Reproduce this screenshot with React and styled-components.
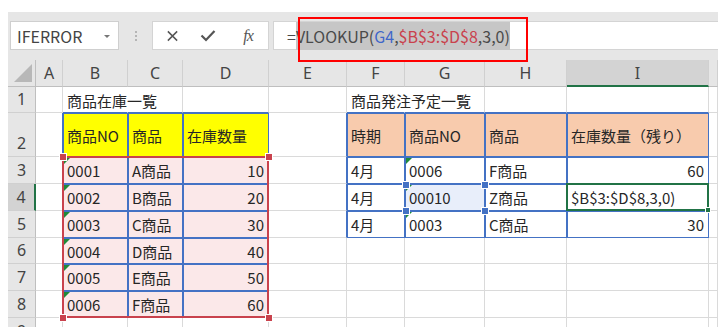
import styled, { createGlobalStyle } from "styled-components";

const GlobalStyle = createGlobalStyle`
  body {
    margin: 0;
    background: #fff;
    font-family: "Noto Sans CJK JP", "Noto Sans", sans-serif;
  }
`;

// row header + A..I + a sliver of J
const COLS = [28, 27, 65, 55, 86, 78, 58, 80, 82, 142, 9];
// column header + rows 1..9 (row 9 is cut by the window edge)
const ROWS = [27, 26, 44, 27, 27, 27, 26, 27, 27, 27];
const LETTERS = ["A", "B", "C", "D", "E", "F", "G", "H", "I", ""];

const BLUE = "#4472c4";
const GRID = "#dadada";
const GREEN = "#217346";
const RED = "#c9424d";

const colX = (c) => COLS.slice(0, c + 1).reduce((a, b) => a + b, 0);
const rowY = (r) => ROWS.slice(0, r).reduce((a, b) => a + b, 0);

const inTable = (r, c) =>
  (r >= 2 && r <= 8 && c >= 1 && c <= 3) || (r >= 2 && r <= 5 && c >= 5 && c <= 8);

const DATA = {
  1: { 1: "商品在庫一覧", 5: "商品発注予定一覧" },
  2: { 1: "商品NO", 2: "商品", 3: "在庫数量", 5: "時期", 6: "商品NO", 7: "商品", 8: "在庫数量（残り）" },
  3: { 1: "0001", 2: "A商品", 3: 10, 5: "4月", 6: "0006", 7: "F商品", 8: 60 },
  4: { 1: "0002", 2: "B商品", 3: 20, 5: "4月", 6: "00010", 7: "Z商品", 8: "$B$3:$D$8,3,0)" },
  5: { 1: "0003", 2: "C商品", 3: 30, 5: "4月", 6: "0003", 7: "C商品", 8: 30 },
  6: { 1: "0004", 2: "D商品", 3: 40 },
  7: { 1: "0005", 2: "E商品", 3: 50 },
  8: { 1: "0006", 2: "F商品", 3: 60 },
};

const fillOf = (r, c) => {
  if (r === 2 && c >= 1 && c <= 3) return "#ffff00";
  if (r === 2 && c >= 5 && c <= 8) return "#f8cbad";
  if (r >= 3 && r <= 8 && c >= 1 && c <= 3) return "#fbe8e9";
  if (r === 4 && c === 6) return "#e8eefa";
  return "transparent";
};

const hasFlag = (r, c) => (c === 1 && r >= 3 && r <= 8) || (c === 6 && r >= 3 && r <= 5);

const Page = styled.div`
  position: relative;
  width: 725px;
  height: 327px;
  overflow: hidden;
  background: #fff;
`;

const Caption = styled.div`
  position: relative;
  height: 12px;
  overflow: hidden;
`;

// only the lowest strokes of this line show above the window
const CaptionText = styled.div`
  position: absolute;
  left: 78px;
  top: -23px;
  color: #ff0000;
  font-size: 17px;
  line-height: 17px;
  white-space: nowrap;
  letter-spacing: 4px;
`;

const Window = styled.div`
  position: relative;
  width: 710px;
  margin-left: 8px;
  background: #e6e6e6;
`;

const Toolbar = styled.div`
  display: flex;
  height: 29px;
  padding: 9px 0 10px 2px;
`;

const NameBox = styled.div`
  position: relative;
  display: flex;
  align-items: center;
  width: 109px;
  box-sizing: border-box;
  padding-left: 6px;
  background: #fff;
  border: 1px solid #cfcfcf;
  color: #444;
  font-size: 16px;
`;

const DropArrow = styled.span`
  position: absolute;
  right: 8px;
  top: 13px;
  border-left: 3px solid transparent;
  border-right: 3px solid transparent;
  border-top: 3px solid #777;
`;

const Grip = styled.div`
  display: flex;
  flex-direction: column;
  justify-content: center;
  align-items: center;
  gap: 2px;
  width: 33px;

  i {
    width: 2px;
    height: 2px;
    background: #b5b5b5;
  }
`;

const ButtonBox = styled.div`
  display: flex;
  align-items: center;
  width: 117px;
  box-sizing: border-box;
  padding-left: 13px;
  background: #fff;
  border: 1px solid #d4d4d4;
`;

const IconSlot = styled.span`
  display: flex;
  justify-content: center;
  align-items: center;
  width: ${(p) => p.$w}px;
  color: #555;
`;

const Fx = styled.span`
  font-family: "Liberation Serif", serif;
  font-style: italic;
  font-size: 16px;
  color: #555;
  letter-spacing: -1px;
`;

const FormulaBox = styled.div`
  display: flex;
  align-items: center;
  flex: 1;
  margin-left: 4px;
  padding-left: 13px;
  background: #fff;
  border: 1px solid #d4d4d4;
  border-right: none;
  font-size: 16px;
  color: #4a4a4a;
  white-space: nowrap;
`;

const Selected = styled.span`
  display: inline-block;
  padding: 2px 0;
  background: #c6c6c6;
`;

const Ref = styled.span`
  color: ${(p) => p.$c};
`;

const Callout = styled.div`
  position: absolute;
  left: 290px;
  top: 5px;
  width: 230px;
  height: 45px;
  box-sizing: border-box;
  border: 2px solid #ff0000;
  pointer-events: none;
  z-index: 3;
`;

const Sheet = styled.div`
  position: relative;
  display: grid;
  grid-template-columns: ${COLS.map((w) => `${w}px`).join(" ")};
  grid-template-rows: ${ROWS.map((h) => `${h}px`).join(" ")};
  background: #fff;
  font-size: 15px;
`;

const Corner = styled.div`
  position: relative;
  background: #e6e6e6;
  border-right: 1px solid #bfbfbf;
  border-bottom: 1px solid #bfbfbf;

  &::after {
    content: "";
    position: absolute;
    right: 3px;
    bottom: 4px;
    border-left: 18px solid transparent;
    border-bottom: 18px solid #b8b8b8;
  }
`;

const ColHead = styled.div`
  display: flex;
  justify-content: center;
  align-items: center;
  box-sizing: border-box;
  background: ${(p) => (p.$active ? "#d3d3d3" : "#e6e6e6")};
  border-right: 1px solid #d0d0d0;
  border-bottom: ${(p) => (p.$active ? `2px solid ${GREEN}` : "1px solid #bfbfbf")};
  color: #444;
  font-family: "Noto Sans", sans-serif;
  font-size: 16px;
`;

const RowHead = styled.div`
  display: flex;
  justify-content: center;
  align-items: flex-end;
  box-sizing: border-box;
  padding-bottom: 2px;
  overflow: hidden;
  background: ${(p) => (p.$active ? "#d3d3d3" : "#e6e6e6")};
  border-right: ${(p) => (p.$active ? `2px solid ${GREEN}` : "1px solid #bfbfbf")};
  border-bottom: 1px solid #d0d0d0;
  color: #444;
  font-family: "Noto Sans", sans-serif;
  font-size: 16px;
  line-height: 22px;
`;

const Cell = styled.div`
  position: relative;
  display: flex;
  align-items: center;
  justify-content: ${(p) => (p.$right ? "flex-end" : "flex-start")};
  box-sizing: border-box;
  padding: 1px 4px 0 4px;
  background: ${(p) => p.$fill};
  border-right: 1px solid ${(p) => p.$rc};
  border-bottom: 1px solid ${(p) => p.$bc};
  box-shadow: ${(p) => (p.$table ? `inset 1px 1px 0 ${BLUE}` : "none")};
  color: #262626;
  white-space: nowrap;
  overflow: visible;
  z-index: ${(p) => (p.$spill ? 1 : 0)};
`;

const Flag = styled.span`
  position: absolute;
  left: 1px;
  top: 1px;
  border-top: 6px solid #1f8a3a;
  border-right: 6px solid transparent;
`;

const RangeBox = styled.div`
  position: absolute;
  box-sizing: border-box;
  border: 2px solid ${(p) => p.$color};
  pointer-events: none;
  z-index: 2;
`;

const Handle = styled.span`
  position: absolute;
  width: 6px;
  height: 6px;
  background: ${(p) => p.$color};
  border: 1px solid #fff;
  z-index: 3;
`;

function Sheet1() {
  const cells = [];
  cells.push(<Corner key="corner" />);
  LETTERS.forEach((l, c) => {
    cells.push(
      <ColHead key={`h${c}`} $active={l === "I"}>
        {l}
      </ColHead>
    );
  });
  for (let r = 1; r <= 9; r++) {
    cells.push(
      <RowHead key={`r${r}`} $active={r === 4}>
        {r}
      </RowHead>
    );
    LETTERS.forEach((_, c) => {
      const v = DATA[r] && DATA[r][c];
      const spill = r === 1 && (c === 1 || c === 5);
      const rc = spill ? "transparent" : inTable(r, c) || inTable(r, c + 1) ? BLUE : GRID;
      const bc = inTable(r, c) || inTable(r + 1, c) ? BLUE : GRID;
      cells.push(
        <Cell
          key={`${r}-${c}`}
          $fill={fillOf(r, c)}
          $table={inTable(r, c)}
          $rc={rc}
          $bc={bc}
          $right={typeof v === "number"}
          $spill={spill}
        >
          {hasFlag(r, c) && <Flag />}
          {v}
        </Cell>
      );
    });
  }

  // B3:D8 reference range (red), G4 reference (blue), I4 active cell (green)
  const bx = colX(1), by = rowY(3), bw = colX(4) - colX(1), bh = rowY(9) - rowY(3);
  const gx = colX(6), gy = rowY(4), gw = COLS[7], gh = ROWS[4];
  const ix = colX(8), iy = rowY(4), iw = COLS[9], ih = ROWS[4];

  const corners = (x, y, w, h) => [
    [x, y],
    [x + w, y],
    [x, y + h],
    [x + w, y + h],
  ];

  return (
    <Sheet>
      {cells}
      <RangeBox $color={RED} style={{ left: bx - 1, top: by - 1, width: bw + 1, height: bh + 1 }} />
      {corners(bx - 1, by - 1, bw, bh).map(([x, y], i) => (
        <Handle key={`rh${i}`} $color={RED} style={{ left: x - 3, top: y - 3 }} />
      ))}
      {corners(gx, gy, gw - 1, gh - 1).map(([x, y], i) => (
        <Handle key={`gh${i}`} $color={BLUE} style={{ left: x - 3, top: y - 3 }} />
      ))}
      <RangeBox $color={GREEN} style={{ left: ix - 1, top: iy - 1, width: iw + 1, height: ih + 1 }} />
      <Handle $color={GREEN} style={{ left: ix + iw - 4, top: iy + ih - 4, width: 4, height: 4 }} />
    </Sheet>
  );
}

function CrossIcon() {
  return (
    <svg width="14" height="14" viewBox="0 0 14 14">
      <path d="M2 2 L12 12 M12 2 L2 12" stroke="#555" strokeWidth="1.6" fill="none" />
    </svg>
  );
}

function CheckIcon() {
  return (
    <svg width="16" height="13" viewBox="0 0 16 13">
      <path d="M1.5 6.5 L6 11 L14.5 2" stroke="#555" strokeWidth="2.2" fill="none" />
    </svg>
  );
}

export default function App() {
  return (
    <>
      <GlobalStyle />
      <Page>
        <Caption>
          <CaptionText>検索値が見つからない場合に「#N/A」となるので、IFERROR関数で空白にする</CaptionText>
        </Caption>
        <Window>
          <Toolbar>
            <NameBox>
              IFERROR
              <DropArrow />
            </NameBox>
            <Grip>
              <i />
              <i />
              <i />
            </Grip>
            <ButtonBox>
              <IconSlot $w={13}>
                <CrossIcon />
              </IconSlot>
              <IconSlot $w={58}>
                <CheckIcon />
              </IconSlot>
              <IconSlot $w={22}>
                <Fx>fx</Fx>
              </IconSlot>
            </ButtonBox>
            <FormulaBox>
              =
              <Selected>
                VLOOKUP(<Ref $c="#3f67c9">G4</Ref>,<Ref $c={RED}>$B$3:$D$8</Ref>,3,0)
              </Selected>
            </FormulaBox>
          </Toolbar>
          <Callout />
          <Sheet1 />
        </Window>
      </Page>
    </>
  );
}
